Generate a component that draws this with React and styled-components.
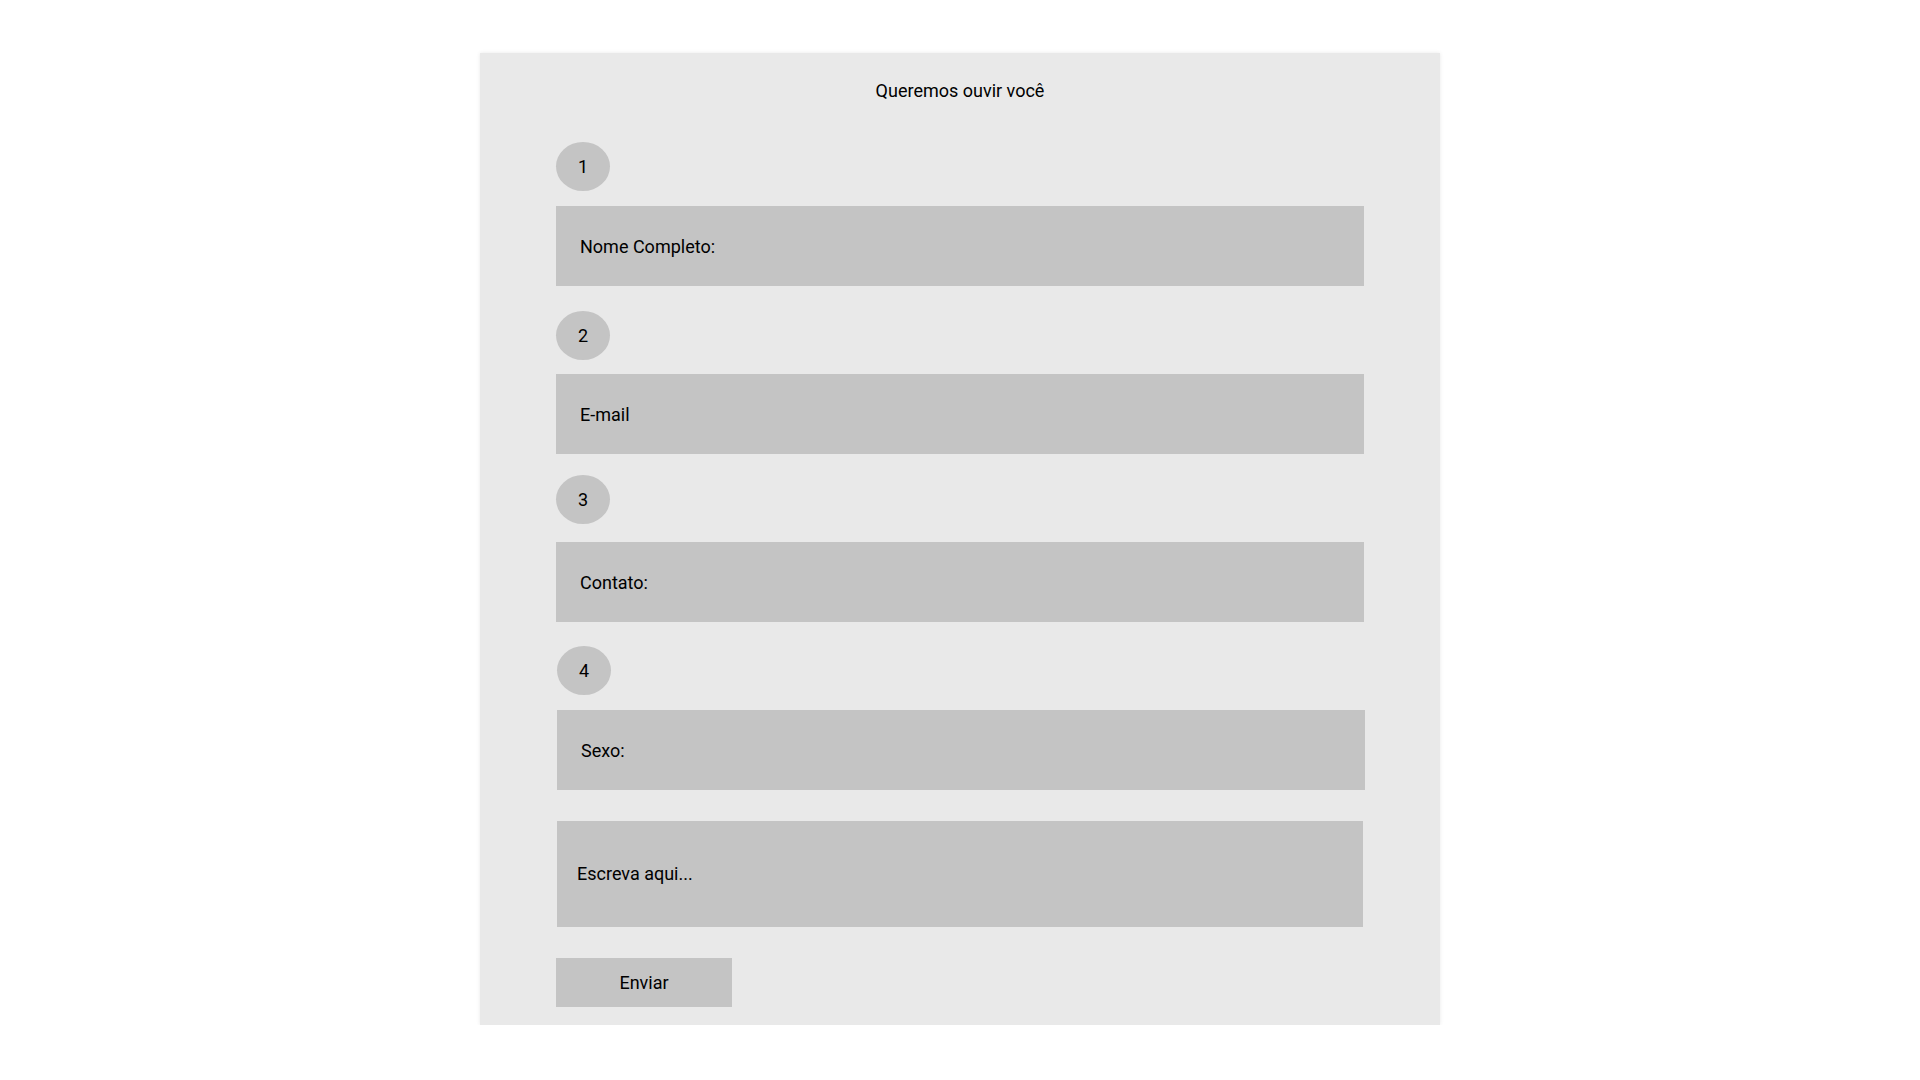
import React from "react";
import styled, { createGlobalStyle } from "styled-components";

const Global = createGlobalStyle`
  html, body { margin: 0; padding: 0; background: #ffffff; }
  body { font-family: Roboto, "Noto Sans", Arial, sans-serif; color: #000; }
  * { box-sizing: border-box; }
`;

const Page = styled.div`
  display: flex;
  justify-content: center;
  align-items: flex-start;
  padding-top: 53px;
`;

const Panel = styled.form`
  width: 960px;
  background: #e9e9e9;
  box-shadow: 0 0 4px rgba(0, 0, 0, 0.09);
  padding: 27px 76px 18px 76px;
  display: flex;
  flex-direction: column;
  align-items: flex-start;
`;

const Title = styled.h1`
  margin: 0;
  align-self: stretch;
  text-align: center;
  font-family: Roboto, sans-serif;
  font-weight: 400;
  font-size: 18px;
  line-height: 22px;
  color: #000;
`;

const Step = styled.div`
  width: 54px;
  height: 49px;
  border-radius: 50%;
  background: #c4c4c4;
  display: flex;
  align-items: center;
  justify-content: center;
  font-size: 18px;
  line-height: 22px;
  color: #000;
  margin-top: ${(p) => p.$mt}px;
  margin-left: ${(p) => p.$ml || 0}px;
`;

const Field = styled.input`
  display: block;
  width: 808px;
  height: 80px;
  margin-top: ${(p) => p.$mt}px;
  margin-left: ${(p) => p.$ml || 0}px;
  border: none;
  outline: none;
  background: #c4c4c4;
  padding: 0 24px;
  font-family: Roboto, sans-serif;
  font-size: 18px;
  color: #000;
  &::placeholder { color: #000; opacity: 1; }
`;

const Area = styled.textarea`
  display: block;
  width: 806px;
  height: 106px;
  margin-top: 31px;
  margin-left: 1px;
  border: none;
  outline: none;
  resize: none;
  background: #c4c4c4;
  padding: 42px 20px 0 20px;
  font-family: Roboto, sans-serif;
  font-size: 18px;
  line-height: 22px;
  color: #000;
  &::placeholder { color: #000; opacity: 1; }
`;

const Submit = styled.button`
  margin-top: 31px;
  width: 176px;
  height: 49px;
  border: none;
  background: #c4c4c4;
  font-family: Roboto, sans-serif;
  font-size: 18px;
  color: #000;
  padding: 0;
  cursor: pointer;
`;

const fields = [
  { n: 1, label: "Nome Completo:", circleMt: 40, inputMt: 15 },
  { n: 2, label: "E-mail", circleMt: 25, inputMt: 14 },
  { n: 3, label: "Contato:", circleMt: 21, inputMt: 18 },
  { n: 4, label: "Sexo:", circleMt: 24, inputMt: 15, ml: 1 },
];

export default function App() {
  return (
    <>
      <Global />
      <Page>
        <Panel onSubmit={(e) => e.preventDefault()}>
          <Title>Queremos ouvir você</Title>
          {fields.map((f) => (
            <React.Fragment key={f.n}>
              <Step $mt={f.circleMt} $ml={f.ml}>{f.n}</Step>
              <Field $mt={f.inputMt} $ml={f.ml} placeholder={f.label} />
            </React.Fragment>
          ))}
          <Area placeholder="Escreva aqui..." />
          <Submit type="submit">Enviar</Submit>
        </Panel>
      </Page>
    </>
  );
}
